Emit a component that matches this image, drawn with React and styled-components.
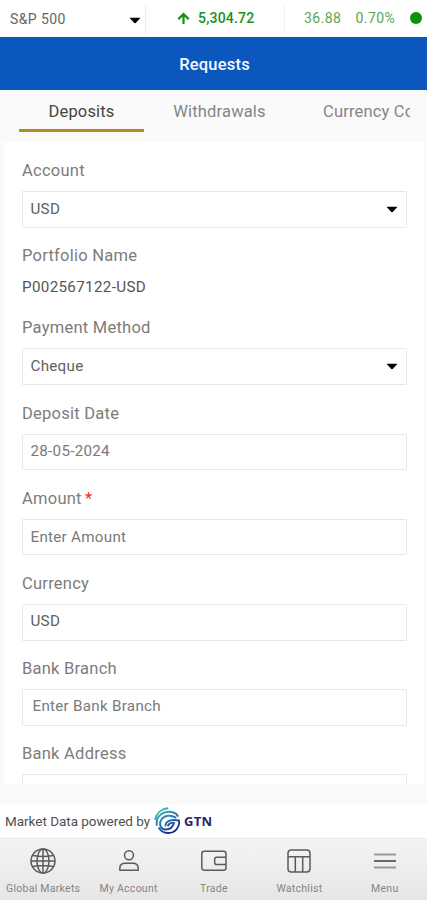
import React from 'react';
import styled, { createGlobalStyle } from 'styled-components';

const GlobalStyle = createGlobalStyle`
  * { box-sizing: border-box; }
  body { margin: 0; background: #fff; font-family: Roboto, sans-serif; }
`;

const Screen = styled.div`
  width: 427px;
  height: 900px;
  display: flex;
  flex-direction: column;
  overflow: hidden;
  background: #fafafa;
`;

const Ticker = styled.header`
  height: 37px;
  flex: none;
  display: flex;
  align-items: flex-start;
  background: #fff;
`;

const IndexPicker = styled.div`
  width: 146px;
  height: 29px;
  margin-top: 5px;
  padding: 0 4px 1px 10px;
  display: flex;
  align-items: center;
  justify-content: space-between;
  border-right: 1px solid #ececec;
  font-size: 14px;
  letter-spacing: 0.4px;
  color: #666;
`;

const LastPrice = styled.div`
  width: 139px;
  height: 29px;
  margin-top: 5px;
  padding: 0 0 3px 31px;
  display: flex;
  align-items: center;
  gap: 8px;
  border-right: 1px solid #f2f2f2;
  font-size: 14px;
  font-weight: 500;
  letter-spacing: 0.2px;
  color: #16911b;
`;

const Changes = styled.div`
  flex: 1;
  height: 35px;
  padding: 0 5px 0 19px;
  display: flex;
  align-items: center;
  gap: 14px;
  font-size: 14px;
  letter-spacing: 0.45px;
  color: #58a552;
`;

const StatusDot = styled.span`
  width: 12px;
  height: 12px;
  margin-left: auto;
  border-radius: 50%;
  background: #079407;
`;

const TitleBar = styled.div`
  height: 53px;
  flex: none;
  display: flex;
  align-items: center;
  justify-content: center;
  padding: 1px 0 0 2px;
  background: #0b57bd;
  color: #f4f7ff;
  font-size: 16.5px;
  font-weight: 500;
  letter-spacing: 0.2px;
`;

const Tabs = styled.nav`
  height: 52px;
  flex: none;
  display: flex;
  gap: 13px;
  margin: 0 17px 0 19px;
  overflow: hidden;
`;

const Tab = styled.div`
  width: 125px;
  height: 42px;
  flex: none;
  display: flex;
  justify-content: center;
  align-items: center;
  border-bottom: 3px solid ${(p) => (p.$active ? '#b28c20' : 'transparent')};
  color: ${(p) => (p.$active ? '#444' : '#858585')};
  font-size: 16.5px;
  letter-spacing: 0.17px;
  white-space: nowrap;
  padding-top: 3px;
`;

const WideTab = styled(Tab)`
  width: 168px;
  margin-left: 28px;
  justify-content: flex-start;
`;

const Card = styled.main`
  height: 642px;
  flex: none;
  margin: 0 3px 0 4px;
  padding: 19px 17px 0 18px;
  overflow: hidden;
  background: #fff;
`;

const Field = styled.section`
  height: ${(p) => p.$height || 85.2}px;
`;

const Label = styled.div`
  height: 20px;
  line-height: 20px;
  font-size: 16.5px;
  letter-spacing: 0.25px;
  color: #7c7c7c;
`;

const Required = styled.span`
  color: #f42a2a;
  margin-left: -1px;
`;

const Box = styled.div`
  height: 36.5px;
  margin-top: 10px;
  padding: 0 8px ${(p) => p.$lift || 1}px ${(p) => p.$indent || 7.5}px;
  display: flex;
  align-items: center;
  justify-content: space-between;
  border: 1px solid #e8e8e8;
  border-radius: 1px;
  font-size: 15.2px;
  letter-spacing: 0.27px;
  color: ${(p) => (p.$dim ? '#7a7a7a' : '#606060')};
`;

const PlainValue = styled.div`
  height: 20px;
  margin-top: 11px;
  line-height: 20px;
  font-size: 15.2px;
  letter-spacing: 0.33px;
  color: #555;
`;

const PoweredBy = styled.div`
  height: 34px;
  flex: none;
  margin-top: 20px;
  padding-left: 5px;
  display: flex;
  align-items: center;
  background: #fff;
  color: #505050;
  font-size: 13.5px;
  letter-spacing: -0.03px;
`;

const Brand = styled.span`
  margin-left: 2px;
  font-family: "Open Sans", sans-serif;
  font-size: 13px;
  font-weight: 700;
  letter-spacing: 0.2px;
  color: #2b2468;
`;

const BottomNav = styled.nav`
  height: 62px;
  flex: none;
  display: grid;
  grid-template-columns: repeat(5, 1fr);
  border-top: 1px solid #e9e9e9;
  background: linear-gradient(#f4f4f4, #e6e6e6);
`;

const NavItem = styled.div`
  display: flex;
  flex-direction: column;
  align-items: center;
  padding: 8px 0 0 1px;
  gap: 7px;
  color: #858585;
  font-size: 10.5px;
  line-height: 14px;
  letter-spacing: 0.26px;
  white-space: nowrap;
`;

const CaretSvg = styled.svg`
  flex: none;
  margin-top: ${(p) => p.$drop || 1}px;
`;

const MarkSvg = styled.svg`
  flex: none;
  margin-left: 4px;
`;

const Caret = ({ drop }) => (
  <CaretSvg $drop={drop} width="12" height="7" viewBox="0 0 12 7">
    <path d="M.5.7h11L7.2 5.600Q6 6.800 4.800 5.600z" fill="#000" />
  </CaretSvg>
);

const UpArrow = () => (
  <svg width="13" height="13" viewBox="0 0 14 13" fill="none" stroke="#16911b" strokeWidth="2.4">
    <path d="M7 12.500V2M1.400 7.200 7 1.800l5.600 5.400" />
  </svg>
);

const BrandMark = () => (
  <MarkSvg width="28" height="28" viewBox="0 0 28 28" fill="none" strokeWidth="1.9" strokeLinecap="round">
    <defs>
      <linearGradient id="mark" x1="5" y1="2" x2="20" y2="25" gradientUnits="userSpaceOnUse">
        <stop stopColor="#35c9bb" />
        <stop offset=".5" stopColor="#2278b4" />
        <stop offset="1" stopColor="#241b8e" />
      </linearGradient>
    </defs>
    <g stroke="url(#mark)">
      <path d="M1.300 12C2.500 6.500 7 2 13.500 1.300" />
      <path d="M2.800 18C1.500 10.500 7.500 4.800 15 4.800c3.800 0 7 1.400 8.800 4.200" />
      <path d="M21.500 10.500C17 7.500 10.500 8.300 7.500 12.500 4.500 17 6.500 22.500 11.500 22.500c4.500 0 7.500-2.800 8.500-6.500-2.500-.4-4.800.3-6 2.500" />
      <path d="M11.500 18.500c0-4 5-6.500 13.500-5 1 6-3.500 12.500-10.500 12.500-4 0-7.500-1.500-9.500-5" />
    </g>
  </MarkSvg>
);

const iconProps = { width: 28, height: 28, viewBox: '0 0 28 28', fill: 'none', stroke: '#5b5b5b', strokeWidth: 1.5 };

const GlobeIcon = () => (
  <svg {...iconProps}>
    <circle cx="14" cy="14" r="12" />
    <ellipse cx="14" cy="14" rx="6" ry="12" />
    <path d="M14 2v24M2 14h24M4 8.500q10 2 20 0M4 19.500q10-2 20 0" />
  </svg>
);
const UserIcon = () => (
  <svg {...iconProps}>
    <circle cx="14" cy="8.300" r="4.500" />
    <path d="M4.800 23.300v-1.800c0-3.300 2.400-5.200 5.500-5.200h7.400c3.100 0 5.500 1.900 5.500 5.200v1.800z" strokeLinejoin="round" />
  </svg>
);
const WalletIcon = () => (
  <svg {...iconProps}>
    <rect x="1.800" y="4.300" width="24.200" height="19" rx="2.500" />
    <path d="M26 10.300H16.500q-1.800 0-1.800 1.800v3.600q0 1.800 1.800 1.800H26" />
  </svg>
);
const TableIcon = () => (
  <svg {...iconProps}>
    <rect x="3" y="3" width="22" height="22" rx="3.200" />
    <path d="M3 9.700h22M10.300 9.700V25M17.700 9.700V25" />
  </svg>
);
const MenuIcon = () => (
  <svg {...iconProps}>
    <path d="M3 7.500h22M3 20.500h22" stroke="#999" strokeWidth="2" />
    <path d="M3 14h22" strokeWidth="1.800" />
  </svg>
);

const remainingFields = [
  { label: 'Payment Method', value: 'Cheque', select: true },
  { label: 'Deposit Date', value: '28-05-2024', dim: true },
  { label: 'Amount', value: 'Enter Amount', dim: true, required: true },
  { label: 'Currency', value: 'USD', lift: 3 },
  { label: 'Bank Branch', value: 'Enter Bank Branch', dim: true, indent: 9.5, lift: 2 },
  { label: 'Bank Address', value: '' },
];

const navItems = [
  ['Global Markets', GlobeIcon],
  ['My Account', UserIcon],
  ['Trade', WalletIcon],
  ['Watchlist', TableIcon],
  ['Menu', MenuIcon],
];

function FormField({ label, value, select, dim, required, indent, lift }) {
  return (
    <Field>
      <Label>{label}{required && <Required> *</Required>}</Label>
      <Box $dim={dim} $indent={indent} $lift={lift}>{value}{select && <Caret />}</Box>
    </Field>
  );
}

export default function App() {
  return (
    <Screen>
      <GlobalStyle />
      <Ticker>
        <IndexPicker>S&amp;P 500<Caret drop={3} /></IndexPicker>
        <LastPrice><UpArrow />5,304.72</LastPrice>
        <Changes><span>36.88</span><span>0.70%</span><StatusDot /></Changes>
      </Ticker>
      <TitleBar>Requests</TitleBar>
      <Tabs>
        <Tab $active>Deposits</Tab>
        <Tab>Withdrawals</Tab>
        <WideTab>Currency Conversion</WideTab>
      </Tabs>
      <Card>
        <FormField label="Account" value="USD" select />
        <Field $height={72.3}>
          <Label>Portfolio Name</Label>
          <PlainValue>P002567122-USD</PlainValue>
        </Field>
        {remainingFields.map((f) => <FormField key={f.label} {...f} />)}
      </Card>
      <PoweredBy>
        Market Data powered by<BrandMark /><Brand>GTN</Brand>
      </PoweredBy>
      <BottomNav>
        {navItems.map(([name, Icon]) => <NavItem key={name}><Icon />{name}</NavItem>)}
      </BottomNav>
    </Screen>
  );
}
